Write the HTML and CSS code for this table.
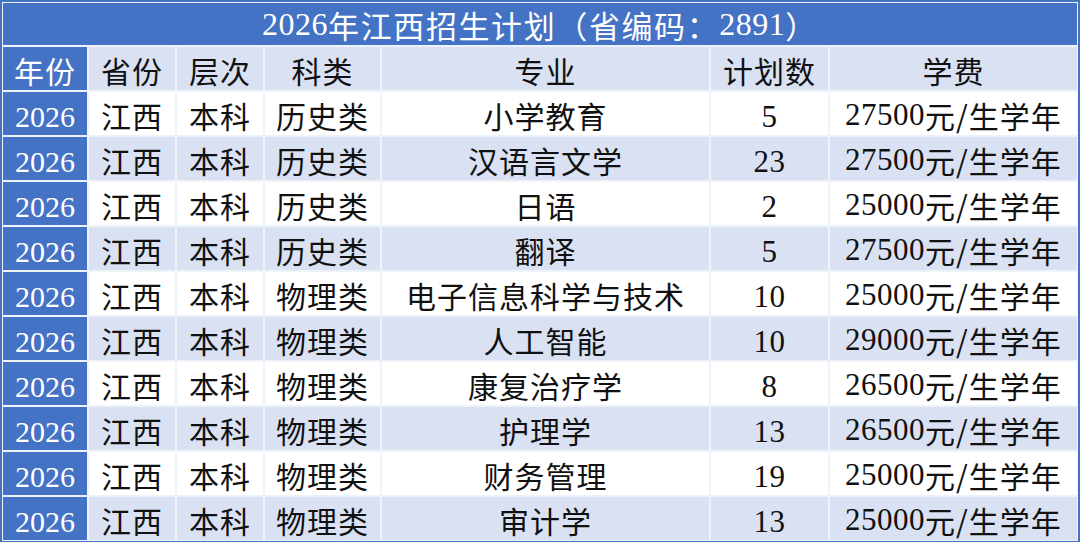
FILE: index.html
```html
<!DOCTYPE html>
<html lang="zh-CN">
<head>
<meta charset="utf-8">
<title>2026年江西招生计划</title>
<link rel="stylesheet" href="styles.css">
</head>
<body>
<div class="sheet">
  <div class="c title"><span class="n" lang="en">2026</span>年江西招生计划（省编码：<span class="n" lang="en">2891</span>）</div>

  <div class="row head">
    <div class="c yr">年份</div><div class="c">省份</div><div class="c">层次</div><div class="c">科类</div><div class="c">专业</div><div class="c">计划数</div><div class="c">学费</div>
  </div>

  <div class="row">
    <div class="c yr n" lang="en">2026</div><div class="c">江西</div><div class="c">本科</div><div class="c">历史类</div><div class="c">小学教育</div><div class="c n" lang="en">5</div><div class="c"><span class="n" lang="en">27500</span>元/生学年</div>
  </div>
  <div class="row alt">
    <div class="c yr n" lang="en">2026</div><div class="c">江西</div><div class="c">本科</div><div class="c">历史类</div><div class="c">汉语言文学</div><div class="c n" lang="en">23</div><div class="c"><span class="n" lang="en">27500</span>元/生学年</div>
  </div>
  <div class="row">
    <div class="c yr n" lang="en">2026</div><div class="c">江西</div><div class="c">本科</div><div class="c">历史类</div><div class="c">日语</div><div class="c n" lang="en">2</div><div class="c"><span class="n" lang="en">25000</span>元/生学年</div>
  </div>
  <div class="row alt">
    <div class="c yr n" lang="en">2026</div><div class="c">江西</div><div class="c">本科</div><div class="c">历史类</div><div class="c">翻译</div><div class="c n" lang="en">5</div><div class="c"><span class="n" lang="en">27500</span>元/生学年</div>
  </div>
  <div class="row">
    <div class="c yr n" lang="en">2026</div><div class="c">江西</div><div class="c">本科</div><div class="c">物理类</div><div class="c">电子信息科学与技术</div><div class="c n" lang="en">10</div><div class="c"><span class="n" lang="en">25000</span>元/生学年</div>
  </div>
  <div class="row alt">
    <div class="c yr n" lang="en">2026</div><div class="c">江西</div><div class="c">本科</div><div class="c">物理类</div><div class="c">人工智能</div><div class="c n" lang="en">10</div><div class="c"><span class="n" lang="en">29000</span>元/生学年</div>
  </div>
  <div class="row">
    <div class="c yr n" lang="en">2026</div><div class="c">江西</div><div class="c">本科</div><div class="c">物理类</div><div class="c">康复治疗学</div><div class="c n" lang="en">8</div><div class="c"><span class="n" lang="en">26500</span>元/生学年</div>
  </div>
  <div class="row alt">
    <div class="c yr n" lang="en">2026</div><div class="c">江西</div><div class="c">本科</div><div class="c">物理类</div><div class="c">护理学</div><div class="c n" lang="en">13</div><div class="c"><span class="n" lang="en">26500</span>元/生学年</div>
  </div>
  <div class="row">
    <div class="c yr n" lang="en">2026</div><div class="c">江西</div><div class="c">本科</div><div class="c">物理类</div><div class="c">财务管理</div><div class="c n" lang="en">19</div><div class="c"><span class="n" lang="en">25000</span>元/生学年</div>
  </div>
  <div class="row alt">
    <div class="c yr n" lang="en">2026</div><div class="c">江西</div><div class="c">本科</div><div class="c">物理类</div><div class="c">审计学</div><div class="c n" lang="en">13</div><div class="c"><span class="n" lang="en">25000</span>元/生学年</div>
  </div>
</div>
</body>
</html>
```
FILE: styles.css
```css
html, body {
  margin: 0;
  padding: 0;
  background: #4472c4;
  height: 542px;
  overflow: hidden;
}

.sheet {
  margin: 2px 2px 0 2px;
  width: 1076px;
  box-sizing: border-box;
  padding: 1px;
  background: #eef2f9;
  display: grid;
  grid-template-columns: 84px 86px 86px 115px 327px 117px 247px;
  grid-template-rows: 42px repeat(11, 43px);
  gap: 2px;
  font-family: "Noto Sans CJK SC", sans-serif;
  font-size: 30px;
  color: #111;
}

.row {
  display: contents;
}

.c {
  display: flex;
  align-items: center;
  justify-content: center;
  background: #ffffff;
  white-space: nowrap;
  letter-spacing: 1px;
  padding-top: 3px;
  box-sizing: border-box;
}

.n {
  font-family: "Liberation Serif", "Times New Roman", serif;
  font-size: 31px;
  letter-spacing: 0.5px;
}

.c.n {
  padding-top: 6px;
}

.row .yr.n {
  font-size: 30px;
  letter-spacing: 0;
}

.head .c,
.alt .c {
  background: #d9e1f2;
}

.title {
  grid-column: 1 / -1;
  background: #4472c4;
  color: #ffffff;
  font-size: 31px;
  letter-spacing: 1.6px;
  padding-top: 1px;
}

.title .n {
  font-size: 32px;
}

.row .yr {
  background: #4472c4;
  color: #ffffff;
}
```
